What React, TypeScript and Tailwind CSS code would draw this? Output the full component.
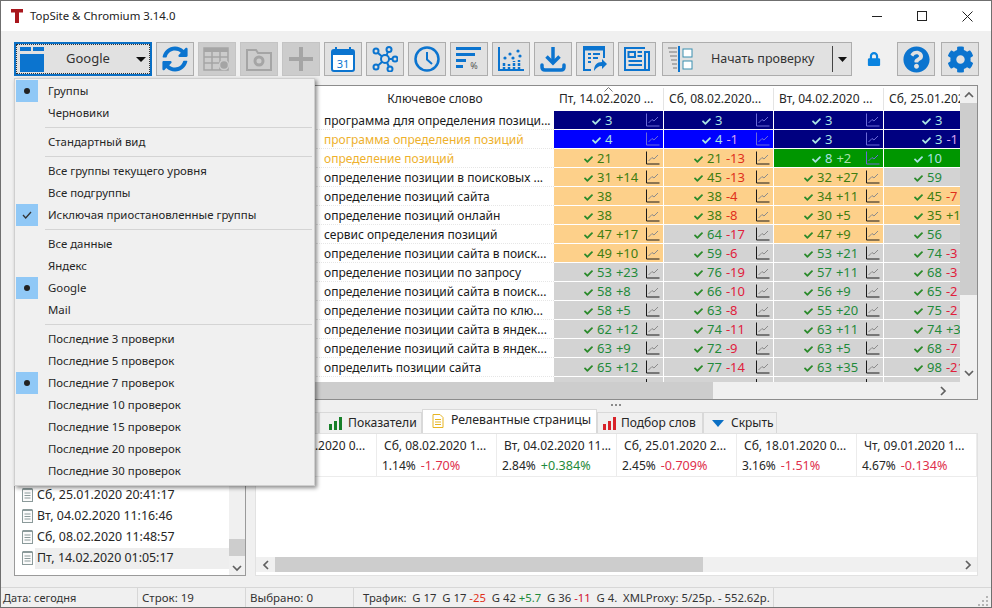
import React from 'react';
import { FaSyncAlt, FaQuestionCircle, FaCog, FaLock, FaCheck } from 'react-icons/fa';

type Tone = 'n' | 'b' | 'g' | 'o' | 's';
type Cell = [Tone, number, number?];

const ROWS: { name: string; warm?: boolean; cells: Cell[] }[] = [
  { name: 'программа для определения позици...', cells: [['n', 3], ['n', 3], ['n', 3], ['n', 3]] },
  { name: 'программа определения позиций', warm: true, cells: [['b', 4], ['b', 4, -1], ['n', 3], ['n', 3, -1]] },
  { name: 'определение позиций', warm: true, cells: [['o', 21], ['o', 21, -13], ['g', 8, 2], ['g', 10]] },
  { name: 'определение позиции в поисковых ...', cells: [['o', 31, 14], ['o', 45, -13], ['o', 32, 27], ['s', 59]] },
  { name: 'определение позиций сайта', cells: [['o', 38], ['o', 38, -4], ['o', 34, 11], ['o', 45, -7]] },
  { name: 'определение позиций онлайн', cells: [['o', 38], ['o', 38, -8], ['o', 30, 5], ['o', 35, 1]] },
  { name: 'сервис определения позиций', cells: [['o', 47, 17], ['s', 64, -17], ['o', 47, 9], ['s', 56]] },
  { name: 'определение позиции сайта в поиск...', cells: [['o', 49, 10], ['s', 59, -6], ['s', 53, 21], ['s', 74, -3]] },
  { name: 'определение позиции по запросу', cells: [['s', 53, 23], ['s', 76, -19], ['s', 57, 11], ['s', 68, -3]] },
  { name: 'определение позиций сайта в поиск...', cells: [['s', 58, 8], ['s', 66, -10], ['s', 56, 9], ['s', 65, -2]] },
  { name: 'определение позиции сайта по клю...', cells: [['s', 58, 5], ['s', 63, -8], ['s', 55, 20], ['s', 75, -2]] },
  { name: 'определение позиции сайта в яндек...', cells: [['s', 62, 12], ['s', 74, -11], ['s', 63, 11], ['s', 74, 3]] },
  { name: 'определение позиций сайта в яндек...', cells: [['s', 63, 9], ['s', 72, -9], ['s', 63, 5], ['s', 68, -7]] },
  { name: 'определить позиции сайта', cells: [['s', 65, 12], ['s', 77, -14], ['s', 63, 35], ['s', 98, -21]] },
];

const MENU: (string | { label: string; mark?: 'dot' | 'check' })[] = [
  { label: 'Группы', mark: 'dot' },
  { label: 'Черновики' },
  '-',
  { label: 'Стандартный вид' },
  '-',
  { label: 'Все группы текущего уровня' },
  { label: 'Все подгруппы' },
  { label: 'Исключая приостановленные группы', mark: 'check' },
  '-',
  { label: 'Все данные' },
  { label: 'Яндекс' },
  { label: 'Google', mark: 'dot' },
  { label: 'Mail' },
  '-',
  { label: 'Последние 3 проверки' },
  { label: 'Последние 5 проверок' },
  { label: 'Последние 7 проверок', mark: 'dot' },
  { label: 'Последние 10 проверок' },
  { label: 'Последние 15 проверок' },
  { label: 'Последние 20 проверок' },
  { label: 'Последние 30 проверок' },
];

const TONE_BG: Record<Tone, string> = {
  n: 'bg-[#000080]',
  b: 'bg-[#0000ff]',
  g: 'bg-[#009600]',
  o: 'bg-[#fdd08a]',
  s: 'bg-[#d3d3d3]',
};

const BLUE = '#0b74cf';

const ChartMark = ({ dark }: { dark: boolean }) => (
  <svg width="14" height="14" viewBox="0 0 14 14" fill="none" className="shrink-0">
    <path d="M0.5 0.5V13H13.5" stroke={dark ? '#6a6ad8' : '#1a1a1a'} />
    <path d="M2.5 10L6 6.5L8 8L12 4" stroke={dark ? '#6a6ad8' : '#8a8a8a'} />
  </svg>
);

const DataCell = ({ cell }: { cell: Cell }) => {
  const [tone, value, delta] = cell;
  const dark = tone === 'n' || tone === 'b' || tone === 'g';
  const main = dark ? 'text-[#a9e3e3]' : tone === 'o' ? 'text-[#3f7d10]' : 'text-[#1f8a3a]';
  const up = dark ? 'text-[#a9e3a9]' : main;
  const down = dark ? 'text-[#d8a0f0]' : tone === 'o' ? 'text-[#e0301a]' : 'text-[#e0203c]';
  return (
    <div className={`relative flex h-[19px] w-[110px] shrink-0 items-center border-r border-b border-white pt-[2px] text-[13px] ${TONE_BG[tone]} ${value < 10 ? 'pl-[38px]' : 'pl-[30px]'}`}>
      <FaCheck className={`mr-[4px] shrink-0 text-[9px] ${dark ? 'text-[#a9e3e3]' : 'text-[#2a8a2a]'}`} />
      <span className={`whitespace-nowrap ${main}`}>{value}</span>
      {delta !== undefined && (
        <span className={`ml-[4px] whitespace-nowrap ${delta > 0 ? up : down}`}>
          {delta > 0 ? `+${delta}` : delta}
        </span>
      )}
      <div className="absolute top-[2px] left-[92px]">
        <ChartMark dark={dark} />
      </div>
    </div>
  );
};

const ToolButton = ({ children, off }: { children: React.ReactNode; off?: boolean }) => (
  <div className={`flex h-[34px] w-[38px] shrink-0 items-center justify-center border ${off ? 'border-[#c4c4c4] bg-[#cccccc]' : 'border-[#adadad] bg-[#e1e1e1]'}`}>
    {children}
  </div>
);

const Arrow = ({ dir }: { dir: 'up' | 'down' | 'left' | 'right' }) => {
  const d = { up: 'M1 6L5 2L9 6', down: 'M1 2L5 6L9 2', left: 'M6 1L2 5L6 9', right: 'M2 1L6 5L2 9' }[dir];
  const box = dir === 'up' || dir === 'down' ? '0 0 10 8' : '0 0 8 10';
  return (
    <svg width={dir === 'up' || dir === 'down' ? 10 : 8} height={dir === 'up' || dir === 'down' ? 8 : 10} viewBox={box} fill="none" stroke="#606060" strokeWidth="1.7">
      <path d={d} />
    </svg>
  );
};

const Bars = ({ color }: { color: string }) => (
  <svg width="13" height="13" viewBox="0 0 13 13" fill={color} className="shrink-0">
    <rect x="0" y="7" width="3" height="6" />
    <rect x="5" y="4" width="3" height="9" />
    <rect x="10" y="0" width="3" height="13" />
  </svg>
);

const NoteIcon = () => (
  <svg width="13" height="14" viewBox="0 0 13 14" fill="none" stroke="#8b9a9a" className="mb-[2px] shrink-0">
    <rect x="1.5" y="1.5" width="10" height="12" fill="#fbfbfb" />
    <path d="M1.5 0.5H11.5M3.5 5H9.5M3.5 7.5H9.5M3.5 10H9.5" />
  </svg>
);

const LIST = [
  ['Сб, 25.01.2020 20:41:17', false],
  ['Вт, 04.02.2020 11:16:46', false],
  ['Сб, 08.02.2020 11:48:57', false],
  ['Пт, 14.02.2020 01:05:17', true],
] as const;

const PAGES = [
  ['Сб, 08.02.2020 1...', '1.14%', '-1.70%'],
  ['Вт, 04.02.2020 11...', '2.84%', '+0.384%'],
  ['Сб, 25.01.2020 2...', '2.45%', '-0.709%'],
  ['Сб, 18.01.2020 0...', '3.16%', '-1.51%'],
  ['Чт, 09.01.2020 1...', '4.67%', '-0.134%'],
];

export default function App() {
  return (
    <div className="relative flex h-[608px] w-[992px] flex-col overflow-hidden border border-[#6f6f6f] bg-[#f0f0f0] font-['Noto_Sans',sans-serif] text-[12px] text-[#262626]">
      {/* title bar */}
      <div className="flex h-[30px] shrink-0 items-center bg-white pl-[10px]">
        <svg width="12" height="14" viewBox="0 0 12 14" className="shrink-0">
          <path d="M0 0H12V3.5H8V14H4V3.5H0Z" fill="#a8161c" />
        </svg>
        <span className="ml-[7px] text-[11.4px] text-[#222]">TopSite &amp; Chromium 3.14.0</span>
        <div className="ml-auto flex items-center pr-[18px]">
          <div className="h-px w-[10px] bg-[#222]" />
          <div className="ml-[35px] h-[10px] w-[10px] border border-[#222]" />
          <svg width="11" height="11" viewBox="0 0 11 11" stroke="#222" className="ml-[35px]">
            <path d="M0.5 0.5L10.5 10.5M10.5 0.5L0.5 10.5" />
          </svg>
        </div>
      </div>

      {/* toolbar */}
      <div className="mt-[11px] flex h-[34px] shrink-0 items-center gap-[4px] pl-[13px]">
        <div className="flex h-[34px] w-[138px] shrink-0 items-center border-2 border-[#0a6fc4] bg-[#e1e1e1] pl-[4px] outline-1 -outline-offset-3 outline-dotted outline-[#333]">
          <svg width="24" height="25" viewBox="0 0 24 25" fill="#0b74cf" className="shrink-0">
            <rect x="0" y="0" width="11" height="4" />
            <rect x="13" y="0" width="11" height="4" />
            <rect x="0" y="7" width="24" height="18" />
          </svg>
          <span className="ml-[22px] text-[13px] text-[#333]">Google</span>
          <svg width="10" height="5" viewBox="0 0 10 5" className="ml-auto mr-[4px]">
            <path d="M0 0H10L5 5Z" fill="#111" />
          </svg>
        </div>
        <ToolButton>
          <FaSyncAlt className="text-[26px] text-[#0b74cf]" />
        </ToolButton>
        <ToolButton off>
          <svg width="28" height="24" viewBox="0 0 28 24" fill="none" stroke="#a5a5a5" strokeWidth="1.5">
            <rect x="1" y="1" width="24" height="22" />
            <path d="M1 3H25" strokeWidth="4" />
            <path d="M1 10H25M1 16H25M9 5V23M17 5V23" />
            <circle cx="21" cy="18" r="4.5" fill="#a5a5a5" stroke="#cccccc" />
          </svg>
        </ToolButton>
        <ToolButton off>
          <svg width="26" height="24" viewBox="0 0 26 24" fill="none" stroke="#a5a5a5" strokeWidth="2">
            <path d="M1 3H10L12 6H25V23H1Z" />
            <circle cx="13" cy="14" r="4" strokeWidth="3" />
          </svg>
        </ToolButton>
        <ToolButton off>
          <svg width="24" height="24" viewBox="0 0 24 24" fill="#a5a5a5">
            <rect x="10" y="0" width="4" height="24" />
            <rect x="0" y="10" width="24" height="4" />
          </svg>
        </ToolButton>
        <ToolButton>
          <svg width="24" height="25" viewBox="0 0 24 25">
            <path d="M5 0V4M19 0V4" stroke={BLUE} strokeWidth="2" />
            <rect x="1" y="3" width="22" height="21" rx="2" fill="white" stroke={BLUE} strokeWidth="2" />
            <rect x="1" y="3" width="22" height="5" fill={BLUE} />
            <text x="12" y="20.5" textAnchor="middle" fontSize="11" fill={BLUE} fontFamily="Noto Sans">31</text>
          </svg>
        </ToolButton>
        <ToolButton>
          <svg width="26" height="26" viewBox="0 0 26 26" fill="none" stroke={BLUE} strokeWidth="2">
            <circle cx="13" cy="13" r="4" />
            <circle cx="4" cy="5" r="2.5" />
            <circle cx="17" cy="3.5" r="2.5" />
            <circle cx="23" cy="13" r="2.5" />
            <circle cx="18" cy="23" r="2.5" />
            <circle cx="4" cy="21" r="2.5" />
            <path d="M6 7L10 10.5M16 5.5L14.5 9.5M20.5 13H17M17 21L15 16.5M6 19.5L10 16" />
          </svg>
        </ToolButton>
        <ToolButton>
          <svg width="26" height="26" viewBox="0 0 26 26" fill="none" stroke={BLUE}>
            <circle cx="13" cy="13" r="11.5" strokeWidth="2.5" />
            <path d="M13 6V13.5L18 18" strokeWidth="2" />
          </svg>
        </ToolButton>
        <ToolButton>
          <svg width="26" height="26" viewBox="0 0 26 26" fill={BLUE}>
            <rect x="0" y="1" width="25" height="3" />
            <rect x="0" y="7" width="19" height="3" />
            <rect x="0" y="13" width="10" height="3" />
            <rect x="0" y="19" width="7" height="3" />
            <text x="18" y="23" textAnchor="middle" fontSize="9" fill="#555" fontFamily="Noto Sans">%</text>
          </svg>
        </ToolButton>
        <ToolButton>
          <svg width="26" height="26" viewBox="0 0 26 26" fill={BLUE}>
            <path d="M1 1V24H26" fill="none" stroke={BLUE} strokeWidth="2" />
            <path d="M6 24V16M11 24V18M16 24V15M21 24V14" stroke={BLUE} strokeWidth="2.5" strokeDasharray="3 1" />
            <circle cx="7" cy="12" r="1.6" />
            <circle cx="12" cy="8" r="1.6" />
            <circle cx="15" cy="12" r="1.6" />
            <circle cx="20" cy="5" r="1.6" />
            <circle cx="22" cy="10" r="1.6" />
          </svg>
        </ToolButton>
        <ToolButton>
          <svg width="26" height="26" viewBox="0 0 26 26" fill="none" stroke={BLUE} strokeWidth="3.5">
            <path d="M13 1V16" />
            <path d="M6.5 10.5L13 17L19.5 10.5" />
            <path d="M2 19V21C2 23 3 24 5 24H21C23 24 24 23 24 21V19" strokeLinecap="round" />
          </svg>
        </ToolButton>
        <ToolButton>
          <svg width="24" height="26" viewBox="0 0 24 26" fill="none" stroke={BLUE} strokeWidth="2">
            <path d="M8 24H1V1H21V12" />
            <path d="M1 3H21" strokeWidth="3" />
            <path d="M5 8H8M10 8H17M5 12H8M10 12H15M5 16H8" />
            <path d="M11 25C11 19 14 16 19 16V13L24 18L19 23V20C15 20 13 22 11 25Z" fill={BLUE} stroke="none" />
          </svg>
        </ToolButton>
        <ToolButton>
          <svg width="26" height="24" viewBox="0 0 26 24" fill="none" stroke={BLUE} strokeWidth="2">
            <path d="M21 1H1V23H25V5H21V23" />
            <rect x="4.5" y="5" width="6.5" height="5" />
            <path d="M13.5 5H18M13.5 9H18M4.5 14H18M4.5 18H18" />
          </svg>
        </ToolButton>
        <div className="ml-[2px] flex h-[34px] w-[190px] shrink-0 items-center border border-[#adadad] bg-[#e1e1e1] pl-[5px]">
          <svg width="25" height="26" viewBox="0 0 25 26" fill="none" className="shrink-0">
            <path d="M0 2H9M1 6H9M2 10H9M3 14H9M4 18H9M5 22H9" stroke="#9a9a9a" strokeWidth="1.5" />
            <path d="M11 0V26" stroke={BLUE} strokeWidth="2" />
            <rect x="15" y="3" width="9" height="8" fill="white" stroke="#3a8fb0" />
            <rect x="15" y="15" width="9" height="8" fill="white" stroke="#3a8fb0" />
          </svg>
          <span className="ml-[18px] text-[12.5px] text-[#333]">Начать проверку</span>
          <div className="ml-auto flex h-[26px] w-[19px] items-center justify-center border-l border-[#444]">
            <svg width="9" height="5" viewBox="0 0 9 5">
              <path d="M0 0H9L4.5 5Z" fill="#111" />
            </svg>
          </div>
        </div>
        <FaLock className="ml-[11px] shrink-0 text-[14px] text-[#0a84e0]" />
        <div className="ml-[12px]">
          <ToolButton>
            <FaQuestionCircle className="text-[27px] text-[#0b74cf]" />
          </ToolButton>
        </div>
        <div className="ml-[2px]">
          <ToolButton>
            <FaCog className="text-[27px] text-[#0b74cf]" />
          </ToolButton>
        </div>
      </div>

      {/* keyword table */}
      <div className="ml-[13px] mt-[9px] flex h-[315px] w-[964px] shrink-0 flex-col border border-[#8c8c8c] bg-white">
        <div className="flex min-h-0 flex-1">
          <div className="w-[301px] shrink-0" />
          <div className="w-[644px] shrink-0 overflow-hidden">
            <div className="flex h-[25px] border-b border-white pt-[2px]">
              <div className="flex w-[238px] shrink-0 items-center justify-center">Ключевое слово</div>
              {['Пт, 14.02.2020 ...', 'Сб, 08.02.2020...', 'Вт, 04.02.2020 ...', 'Сб, 25.01.2020 ...'].map((d, i) => (
                <div key={d} className="relative flex w-[110px] shrink-0 items-center whitespace-nowrap border-r border-[#e4e4e4] pl-[5px]">
                  {i === 0 && (
                    <svg width="9" height="5" viewBox="0 0 9 5" fill="none" stroke="#777" className="absolute top-[-1px] left-[50px]">
                      <path d="M0.5 4.5L4.5 0.5L8.5 4.5" />
                    </svg>
                  )}
                  {d}
                </div>
              ))}
            </div>
            <div className="h-[271px] overflow-hidden">
              {ROWS.map(r => (
                <div key={r.name} className="flex">
                  <div className={`flex h-[19px] w-[238px] shrink-0 items-center whitespace-nowrap border-b border-dotted border-[#e6e6e6] pl-[8px] pt-[2px] ${r.warm ? 'text-[#eeb12d]' : 'text-[#1a1a1a]'}`}>
                    {r.name}
                  </div>
                  {r.cells.map((c, i) => (
                    <DataCell key={i} cell={c} />
                  ))}
                </div>
              ))}
              <div className="flex">
                <div className="h-[19px] w-[238px] shrink-0" />
                {[0, 1, 2, 3].map(i => (
                  <div key={i} className="relative h-[19px] w-[110px] shrink-0 border-r border-white bg-[#d3d3d3]">
                    <div className="absolute top-[2px] left-[92px] h-[4px] w-px bg-[#1a1a1a]" />
                  </div>
                ))}
              </div>
            </div>
          </div>
          <div className="flex flex-1 flex-col items-center bg-[#f0f0f0]">
            <div className="flex h-[17px] items-center">
              <Arrow dir="up" />
            </div>
            <div className="h-[192px] w-full bg-[#cdcdcd]" />
            <div className="mt-auto flex h-[19px] items-center">
              <Arrow dir="down" />
            </div>
          </div>
        </div>
        <div className="flex h-[17px] shrink-0 bg-[#f0f0f0]">
          <div className="w-[698px] shrink-0 bg-[#cdcdcd]" />
          <div className="flex w-[240px] shrink-0 items-center justify-end pr-[6px]">
            <Arrow dir="right" />
          </div>
        </div>
      </div>

      {/* splitter */}
      <div className="flex h-[9px] shrink-0 items-center justify-center gap-[2px] pl-[240px]">
        <div className="h-[2px] w-[2px] bg-[#8a8a8a]" />
        <div className="h-[2px] w-[2px] bg-[#8a8a8a]" />
        <div className="h-[2px] w-[2px] bg-[#8a8a8a]" />
      </div>

      {/* lower part */}
      <div className="flex h-[167px] shrink-0 pl-[13px]">
        <div className="flex h-full w-[232px] shrink-0 border border-[#9a9a9a] bg-white">
          <div className="flex flex-1 flex-col justify-end pb-[6px]">
            {LIST.map(([t, on]) => (
              <div key={t} className="flex h-[21px] items-center pl-[6px] text-[12.4px]">
                <NoteIcon />
                <span className={`ml-[1px] flex h-[21px] flex-1 items-center pl-[2px] ${on ? 'bg-[#eeeeee]' : ''}`}>{t}</span>
              </div>
            ))}
          </div>
          <div className="flex w-[16px] shrink-0 flex-col items-center justify-end bg-[#f0f0f0]">
            <div className="mb-[4px] h-[17px] w-full bg-[#cdcdcd]" />
            <div className="flex h-[15px] items-center">
              <Arrow dir="down" />
            </div>
          </div>
        </div>
        <div className="ml-[9px] flex w-[723px] shrink-0 flex-col">
          <div className="flex h-[24px] shrink-0 items-end pl-[1px]">
            <div className="h-[21px] w-[63px] shrink-0 border border-b-0 border-[#d9d9d9] bg-[#f0f0f0]" />
            <div className="flex h-[21px] w-[103px] shrink-0 items-center border border-b-0 border-[#d9d9d9] bg-[#f0f0f0] pl-[9px]">
              <Bars color="#17802a" />
              <span className="ml-[6px] text-[12.2px]">Показатели</span>
            </div>
            <div className="flex h-[24px] w-[175px] shrink-0 items-center border border-b-0 border-[#d9d9d9] bg-white pb-[1px] pl-[9px]">
              <svg width="12" height="14" viewBox="0 0 12 14" fill="none" stroke="#e6b422" className="shrink-0">
                <path d="M1 0.5H8L11 3.5V13.5H1ZM3 5.5H9M3 8H9M3 10.5H9" />
              </svg>
              <span className="ml-[7px] pb-[2px] text-[12.3px]">Релевантные страницы</span>
            </div>
            <div className="flex h-[21px] w-[106px] shrink-0 items-center border border-b-0 border-[#d9d9d9] bg-[#f0f0f0] pl-[5px]">
              <Bars color="#d8232a" />
              <span className="ml-[5px]">Подбор слов</span>
            </div>
            <div className="flex h-[21px] w-[74px] shrink-0 items-center border border-b-0 border-[#d9d9d9] bg-[#f0f0f0] pl-[8px]">
              <svg width="12" height="7" viewBox="0 0 12 7" className="shrink-0">
                <path d="M0 0H12L6 7Z" fill="#0b6fc4" />
              </svg>
              <span className="ml-[7px]">Скрыть</span>
            </div>
          </div>
          <div className="flex min-h-0 flex-1 flex-col border border-[#e2e2e2] bg-white">
            <div className="flex h-[43px] shrink-0 border-b border-[#ececec] pl-[1px]">
              <div className="flex w-[120px] shrink-0 flex-col border-r border-[#ececec] pl-[7px] pt-[3px]">
                <span className="whitespace-nowrap">Пт, 14.02.2020 0...</span>
              </div>
              {PAGES.map(p => (
                <div key={p[0]} className="flex w-[120px] shrink-0 flex-col border-r border-[#ececec] pl-[5px] pt-[3px]">
                  <span className="h-[22px] whitespace-nowrap pl-[2px]">{p[0]}</span>
                  <span className="whitespace-nowrap">
                    {p[1]}
                    <span className={`ml-[5px] text-[12.6px] ${p[2].startsWith('+') ? 'text-[#1f8a3a]' : 'text-[#e0304c]'}`}>{p[2]}</span>
                  </span>
                </div>
              ))}
            </div>
            <div className="flex-1" />
            <div className="mb-[3px] flex h-[15px] shrink-0 items-center bg-[#f0f0f0]">
              <div className="flex w-[19px] justify-center">
                <Arrow dir="left" />
              </div>
              <div className="h-full w-[428px] bg-[#cdcdcd]" />
              <div className="ml-auto mr-[5px] flex">
                <Arrow dir="right" />
              </div>
            </div>
          </div>
        </div>
      </div>

      {/* status bar */}
      <div className="mt-auto flex h-[20px] shrink-0 items-center border-t border-[#d7d7d7] text-[11.5px] text-[#333]">
        <div className="flex h-full w-[137px] shrink-0 items-center border-r border-[#d7d7d7] pl-[2px] pt-[1px] text-[11px]">Дата: сегодня</div>
        <div className="flex h-full w-[108px] shrink-0 items-center border-r border-[#d7d7d7] pl-[4px] pt-[1px]">Строк: 19</div>
        <div className="flex h-full w-[108px] shrink-0 items-center border-r border-[#d7d7d7] pl-[4px] pt-[1px]">Выбрано: 0</div>
        <div className="flex h-full w-[420px] shrink-0 items-center whitespace-pre border-r border-[#d7d7d7] pl-[9px] pt-[1px] text-[11.3px]">
          {'Трафик:  G 17  G 17 '}
          <span className="text-[#e0301a]">-25</span>
          {'  G 42 '}
          <span className="text-[#1f8a3a]">+5.7</span>
          {'  G 36 '}
          <span className="text-[#d01030]">-11</span>
          {'  G 4.  XMLProxy: 5/25р. - 552.62р.'}
        </div>
        <svg width="11" height="11" viewBox="0 0 11 11" fill="#b5b5b5" className="ml-auto mr-[2px] self-end">
          <rect x="8" y="8" width="2" height="2" />
          <rect x="4" y="8" width="2" height="2" />
          <rect x="0" y="8" width="2" height="2" />
          <rect x="8" y="4" width="2" height="2" />
          <rect x="4" y="4" width="2" height="2" />
          <rect x="8" y="0" width="2" height="2" />
        </svg>
      </div>

      {/* dropdown menu */}
      <div className="absolute left-[13px] top-[77px] w-[301px] border border-[#cfcfcf] bg-[#f0f0f0] pt-[1px] pb-[3px] text-[11.4px] shadow-[2px_2px_4px_rgba(0,0,0,0.45)]">
        {MENU.map((m, i) =>
          typeof m === 'string' ? (
            <div key={i} className="flex h-[7px] items-center pl-[30px] pr-[2px]">
              <div className="h-px w-full bg-[#d4d4d4]" />
            </div>
          ) : (
            <div key={i} className="flex h-[22px] items-center pl-[1px]">
              <div className={`flex h-[22px] w-[22px] shrink-0 items-center justify-center ${m.mark ? 'bg-[#90c8f6]' : ''}`}>
                {m.mark === 'dot' && <div className="h-[6px] w-[6px] rounded-full bg-[#222]" />}
                {m.mark === 'check' && (
                  <svg width="10" height="8" viewBox="0 0 10 8" fill="none" stroke="#333" strokeWidth="1.3">
                    <path d="M1 4L3.7 7L9 1" />
                  </svg>
                )}
              </div>
              <span className="ml-[10px] whitespace-nowrap">{m.label}</span>
            </div>
          )
        )}
      </div>
    </div>
  );
}
